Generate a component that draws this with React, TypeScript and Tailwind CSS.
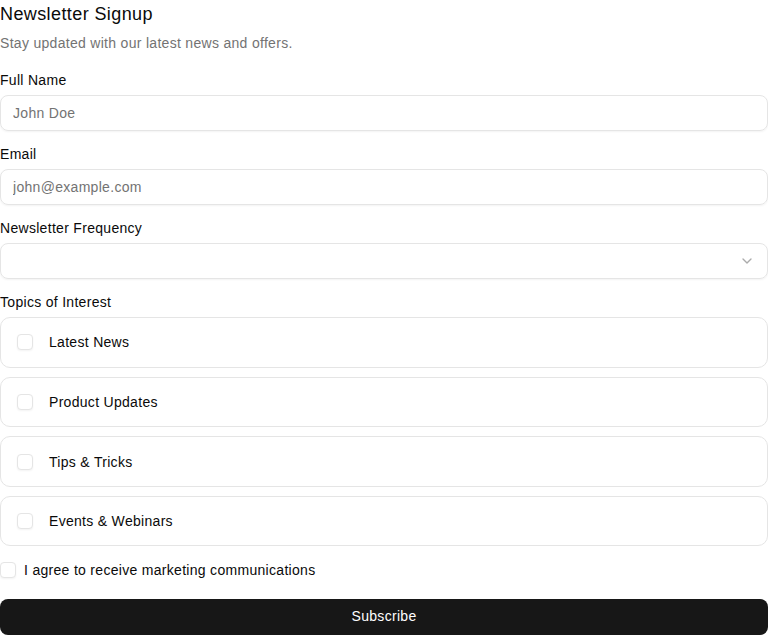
import React from "react";

const topics = ["Latest News", "Product Updates", "Tips & Tricks", "Events & Webinars"];

function Box() {
  return <span className="block h-4 w-4 shrink-0 rounded-[4px] border border-[#e5e5e5] bg-white shadow-[0_1px_2px_rgba(0,0,0,0.05)]" />;
}

export default function App() {
  return (
    <div className="w-[768px] bg-white text-[#0a0a0a] font-['Liberation_Sans',Arial,sans-serif] tracking-[0.3px]">
      <h1 className="text-[18px] leading-[28px] font-normal tracking-[0.4px]">Newsletter Signup</h1>
      <p className="mt-[5px] text-[14px] leading-[20px] text-[#737373]">Stay updated with our latest news and offers.</p>
      <div className="mt-[20px] flex flex-col gap-4">
        <div className="flex flex-col gap-2">
          <label className="text-[14px] leading-[14px]">Full Name</label>
          <input
            placeholder="John Doe"
            className="h-9 w-full rounded-lg border border-[#e5e5e5] px-3 text-[14px] tracking-[0.3px] placeholder:text-[#737373] shadow-[0_1px_2px_rgba(0,0,0,0.05)] outline-none"
          />
        </div>
        <div className="flex flex-col gap-2">
          <label className="text-[14px] leading-[14px]">Email</label>
          <input
            placeholder="john@example.com"
            className="h-9 w-full rounded-lg border border-[#e5e5e5] px-3 text-[14px] tracking-[0.3px] placeholder:text-[#737373] shadow-[0_1px_2px_rgba(0,0,0,0.05)] outline-none"
          />
        </div>
        <div className="flex flex-col gap-2">
          <label className="text-[14px] leading-[14px]">Newsletter Frequency</label>
          <div className="flex h-9 w-full items-center justify-end rounded-lg border border-[#e5e5e5] px-3 shadow-[0_1px_2px_rgba(0,0,0,0.05)]">
            <svg width="16" height="16" viewBox="0 0 24 24" fill="none" stroke="#737373" strokeOpacity="0.6" strokeWidth="2" strokeLinecap="round" strokeLinejoin="round">
              <path d="m6 9 6 6 6-6" />
            </svg>
          </div>
        </div>
        <div className="flex flex-col gap-2">
          <label className="text-[14px] leading-[14px]">Topics of Interest</label>
          <div className="flex flex-col gap-[9.17px]">
            {topics.map((t) => (
              <div key={t} className="flex h-[50.5px] items-center gap-4 rounded-[10px] border border-[#e5e5e5] px-4">
                <Box />
                <span className="text-[14px] leading-[20px]">{t}</span>
              </div>
            ))}
          </div>
        </div>
      </div>
      <div className="mt-[13.5px] flex h-5 items-center gap-2">
        <Box />
        <span className="text-[14px] leading-[20px]">I agree to receive marketing communications</span>
      </div>
      <button className="mt-[19px] flex h-9 w-full items-center justify-center rounded-lg bg-[#171717] text-[14px] font-medium tracking-[0.3px] text-white">
        Subscribe
      </button>
    </div>
  );
}
